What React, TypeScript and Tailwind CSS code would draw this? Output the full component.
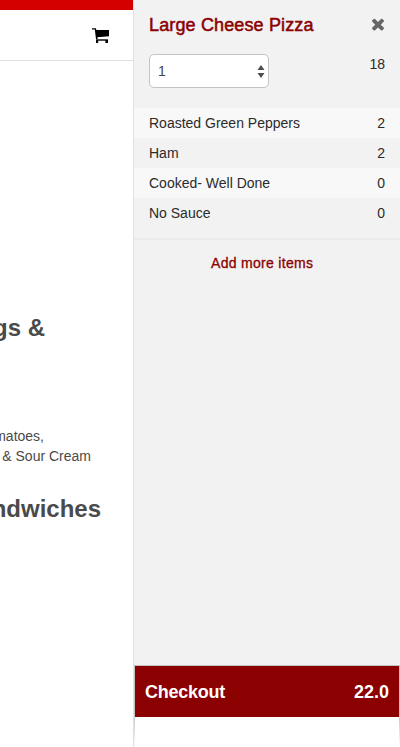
import React, { useState } from 'react';

const TOPPINGS = [
  { id: 1, name: 'Roasted Green Peppers', price: 2 },
  { id: 2, name: 'Ham', price: 2 },
  { id: 3, name: 'Cooked- Well Done', price: 0 },
  { id: 4, name: 'No Sauce', price: 0 },
];

const CartIcon = () => (
  <svg width="18" height="16" viewBox="0 0 18 16" fill="currentColor">
    <path d="M0 .2h3.9l.5 1.8H17v6.2L5.4 9.3l.3 1.7H4L2.8 1.6H0z" />
    <path d="M4 11h12v2H4z" opacity=".7" />
    <path d="M4 12h2.2v3H4zM13.4 12H16v3h-2.6z" />
  </svg>
);

const TimesIcon = () => (
  <svg width="18" height="18" viewBox="0 0 1792 1792" fill="currentColor">
    <path d="M1490 1322q0 40-28 68l-136 136q-28 28-68 28t-68-28l-294-294-294 294q-28 28-68 28t-68-28l-136-136q-28-28-28-68t28-68l294-294-294-294q-28-28-28-68t28-68l136-136q28-28 68-28t68 28l294 294 294-294q28-28 68-28t68 28l136 136q28 28 28 68t-28 68l-294 294 294 294q28 28 28 68z" />
  </svg>
);

const MenuPage = () => (
  <main className="w-[133px] shrink-0 overflow-hidden bg-white text-[#4a4a4a]">
    <div className="h-[10px] bg-[#d40000]" />
    <header className="flex h-[51px] justify-end border-b border-[#e0e0e0] pr-[23px] pt-[18px] text-black">
      <CartIcon />
    </header>
    <div className="flex w-[45px] justify-end pt-[251px]">
      <h2 className="whitespace-nowrap text-2xl leading-8 font-bold">Wings &amp;</h2>
    </div>
    <div className="pt-[82px] text-sm leading-5">
      <p className="flex w-[44px] justify-end whitespace-nowrap">Tomatoes,</p>
      <p className="flex w-[91px] justify-end whitespace-nowrap">Onions &amp; Sour Cream</p>
    </div>
    <div className="flex w-[101px] justify-end pt-[27px]">
      <h2 className="whitespace-nowrap text-2xl leading-8 font-bold">Sandwiches</h2>
    </div>
  </main>
);

const CartPanel = () => {
  const [quantity, setQuantity] = useState('1');

  return (
    <aside className="flex min-w-0 flex-1 flex-col border-l border-[#e0e0e0] bg-[#f2f2f2] text-sm leading-5 text-[#2b2b2b]">
      <div className="flex items-start justify-between pl-[15px] pr-[13px] pt-[15px]">
        <h3 className="text-lg leading-5 tracking-[0.14px] text-[#8b0000] [-webkit-text-stroke:0.5px_#8b0000]">Large Cheese Pizza</h3>
        <button className="text-[#666]">
          <TimesIcon />
        </button>
      </div>

      <div className="flex justify-between px-[15px] pt-[19px]">
        <div className="relative">
          <select
            value={quantity}
            onChange={(e) => setQuantity(e.target.value)}
            className="block h-[34px] w-[120px] appearance-none rounded-[5px] border border-[#c4c4c4] bg-white px-2 text-[#444]"
          >
            {['1', '2', '3', '4', '5'].map((n) => (
              <option key={n}>{n}</option>
            ))}
          </select>
          <svg className="pointer-events-none absolute right-[4px] top-[11px]" width="8" height="13" viewBox="0 0 8 13" fill="#4d4d4d">
            <path d="M4 0l3.5 5H.5zM4 13L.5 8h7z" />
          </svg>
        </div>
        <span>18</span>
      </div>

      <ul className="pt-5">
        {TOPPINGS.map((t) => (
          <li key={t.id} className="flex h-[30px] items-center justify-between px-[15px] odd:bg-[#f8f8f8]">
            <span>{t.name}</span>
            <span>{t.price}</span>
          </li>
        ))}
      </ul>

      <div className="mt-[10px] border-t-2 border-[#eaeaea] pt-[13px] pl-[77px] text-[#8b0000]">
        <button className="tracking-[0.3px] [-webkit-text-stroke:0.3px_#8b0000]">Add more items</button>
      </div>

      {/* Checkout bar, its side borders fade out below the button */}
      <div className="mt-auto h-[82px] border-t border-[#c4c4c4] bg-linear-to-b from-[#c4c4c4] from-60% to-white px-px">
        <div className="h-full bg-white">
          <button className="flex h-[51px] w-full items-center justify-between bg-[#8b0000] px-[10px] text-lg font-bold text-white">
            <span className="tracking-[-0.25px]">Checkout</span>
            <span>22.0</span>
          </button>
        </div>
      </div>
    </aside>
  );
};

const App: React.FC = () => (
  <div className="flex h-screen w-full overflow-hidden bg-white font-['Liberation_Sans',sans-serif]">
    <MenuPage />
    <CartPanel />
  </div>
);

export default App;
